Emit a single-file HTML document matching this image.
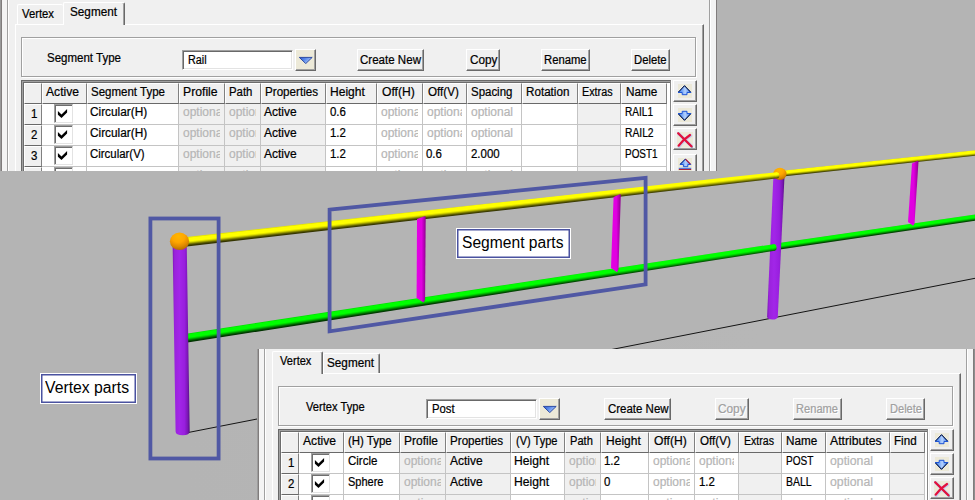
<!DOCTYPE html>
<html lang="en"><head><meta charset="utf-8"><title>Vertex and Segment parts</title>
<style>
html,body{margin:0;padding:0}
body{width:975px;height:500px;overflow:hidden;background:#b4b4b4;position:relative;
 font-family:"Liberation Sans",sans-serif;font-size:12px;color:#000}
.scene{position:absolute;left:0;top:0}
.dlg{position:absolute;background:#f0f0f0;overflow:hidden}
.a,.t,.btn,.edit,.grp,.gridbox,.hc,.rn,.dc,.chk,.clip,.ic,.lbl{position:absolute;box-sizing:border-box}
.t{white-space:nowrap;display:block;transform-origin:0 0;-webkit-text-stroke:0.22px currentColor}
.clip{overflow:hidden}
.btn{background:#f0f0f0;border:1px solid;border-color:#fff #696969 #696969 #fff;box-shadow:inset -1px -1px 0 #a0a0a0}
.cbtn{background:#ece9d8}
.edit{background:#fff;border:1px solid;border-color:#a0a0a0 #fff #fff #a0a0a0;box-shadow:inset 1px 1px 0 #696969,inset -1px -1px 0 #e3e3e3}
.grp{border:1px solid #a0a0a0;box-shadow:1px 1px 0 #fff,inset 1px 1px 0 #fff}
.tab{background:#f0f0f0;border-left:1px solid #fff;border-top:1px solid #fff;border-radius:2px 2px 0 0}
.tab.sel,.tab.last{border-right:1px solid #696969;box-shadow:inset -1px 0 0 #a0a0a0}
.gridbox{background:#fff;border:1px solid;border-color:#696969 #868686 #fff #696969;box-shadow:inset 1px 1px 0 #a0a0a0,inset 2px 2px 0 #6c6c6c,1px 0 0 #fff}
.hc{background:#f0f0f0;border:1px solid;border-color:#fff #808080 #696969 #fff}
.rn{background:#f0f0f0;border:1px solid;border-color:#fff #808080 #696969 #fff}
.dc{border-right:1px solid #c4c4c4;border-bottom:1px solid #c4c4c4}
.chk{background:#fff;border:1px solid;border-color:#a0a0a0 #e3e3e3 #e3e3e3 #a0a0a0;box-shadow:inset 1px 1px 0 #6e6e6e}
.lbl{background:#fff;border:1px solid #fff;box-shadow:inset 0 0 0 1.5px #4a52a0}
</style></head>
<body>
<svg class="scene" width="975" height="500" viewBox="0 0 975 500">
<defs><linearGradient id="pp" x1="0" y1="0" x2="1" y2="0"><stop offset="0" stop-color="#7c18b4"/><stop offset="0.12" stop-color="#9a22dc"/><stop offset="0.4" stop-color="#a226e8"/><stop offset="0.7" stop-color="#981ede"/><stop offset="0.88" stop-color="#7a16b4"/><stop offset="1" stop-color="#540c80"/></linearGradient><linearGradient id="mg" x1="0" y1="0" x2="1" y2="0"><stop offset="0" stop-color="#e400e4"/><stop offset="0.55" stop-color="#e000e0"/><stop offset="0.8" stop-color="#b400b4"/><stop offset="1" stop-color="#8c008c"/></linearGradient><radialGradient id="bl" cx="0.44" cy="0.22" r="0.85"><stop offset="0" stop-color="#ffb600"/><stop offset="0.4" stop-color="#ffa600"/><stop offset="0.68" stop-color="#e08a00"/><stop offset="0.9" stop-color="#b87000"/><stop offset="1" stop-color="#9c5c00"/></radialGradient><linearGradient id="gd" gradientUnits="userSpaceOnUse" x1="184" y1="0" x2="760" y2="0"><stop offset="0" stop-color="#b4b4b4"/><stop offset="1" stop-color="#b7b7b7"/></linearGradient></defs>
<polygon points="184,433.3 975,278.3 975,500 184,500" fill="url(#gd)"/>
<line x1="186" y1="432.94" x2="975" y2="278.30" stroke="#141414" stroke-width="1"/>
<linearGradient id="g2" gradientUnits="userSpaceOnUse" x1="775.54" y1="243.69" x2="776.46" y2="249.98"><stop offset="0" stop-color="#00e600"/><stop offset="0.08" stop-color="#00ff00"/><stop offset="0.44" stop-color="#00ff00"/><stop offset="0.58" stop-color="#00d400"/><stop offset="0.72" stop-color="#009400"/><stop offset="0.87" stop-color="#005000"/><stop offset="1" stop-color="#003000"/></linearGradient><polygon points="775.52,243.57 975.56,214.42 976.44,220.45 776.48,250.10" fill="url(#g2)"/>
<linearGradient id="y2" gradientUnits="userSpaceOnUse" x1="779.70" y1="171.00" x2="780.30" y2="176.67"><stop offset="0" stop-color="#e8e800"/><stop offset="0.08" stop-color="#ffff00"/><stop offset="0.44" stop-color="#ffff00"/><stop offset="0.58" stop-color="#dcdc00"/><stop offset="0.72" stop-color="#9c9c00"/><stop offset="0.87" stop-color="#585800"/><stop offset="1" stop-color="#343400"/></linearGradient><polygon points="779.69,170.90 975.71,150.15 976.29,155.62 780.31,176.77" fill="url(#y2)"/>
<path d="M773.4,176 L784.5,176 L777.8,316.5 Q777.6,319.6 772.3,319.6 Q767,319.6 767.1,316.5 Z" fill="url(#pp)"/>
<ellipse cx="779.9" cy="173.9" rx="6.6" ry="6.2" fill="url(#bl)"/>
<linearGradient id="y1" gradientUnits="userSpaceOnUse" x1="179.55" y1="238.45" x2="180.45" y2="246.40"><stop offset="0" stop-color="#e8e800"/><stop offset="0.08" stop-color="#ffff00"/><stop offset="0.44" stop-color="#ffff00"/><stop offset="0.58" stop-color="#dcdc00"/><stop offset="0.72" stop-color="#9c9c00"/><stop offset="0.87" stop-color="#585800"/><stop offset="1" stop-color="#343400"/></linearGradient><polygon points="179.47,237.70 309.49,223.28 479.53,204.50 719.61,178.25 776.86,172.21 777.54,178.27 720.39,185.10 480.47,212.85 310.51,232.32 180.53,247.15" fill="url(#y1)"/><ellipse cx="777.20" cy="175.24" rx="2.20" ry="3.05" fill="url(#y1)" transform="rotate(-6.42 777.20 175.24)"/>
<linearGradient id="g1" gradientUnits="userSpaceOnUse" x1="181.40" y1="334.92" x2="182.60" y2="342.73"><stop offset="0" stop-color="#00e600"/><stop offset="0.08" stop-color="#00ff00"/><stop offset="0.44" stop-color="#00ff00"/><stop offset="0.58" stop-color="#00d400"/><stop offset="0.72" stop-color="#009400"/><stop offset="0.87" stop-color="#005000"/><stop offset="1" stop-color="#003000"/></linearGradient><polygon points="181.31,334.38 499.39,285.81 773.69,244.14 774.71,250.76 500.61,293.71 182.69,343.27" fill="url(#g1)"/><ellipse cx="774.20" cy="247.45" rx="2.41" ry="3.35" fill="url(#g1)" transform="rotate(-8.77 774.20 247.45)"/>
<polygon points="417,219 424.6,216.2 425.7,216.6 425.1,300 423.4,302.6 416.6,298" fill="url(#mg)"/>
<polygon points="613.6,197 619.8,194.2 620.8,194.6 618.5,269.6 617,272.2 611,268" fill="url(#mg)"/>
<polygon points="912,163.4 917.6,160.8 918.5,161.2 914.5,223.4 913.2,225.8 908,222" fill="url(#mg)"/>
<path d="M172.6,243 L186.7,243 L189.7,431.5 Q189.8,435.3 182.7,435.3 Q175.7,435.3 175.6,431.5 Z" fill="url(#pp)"/>
<ellipse cx="179.5" cy="241.3" rx="9.6" ry="8.7" fill="url(#bl)"/>
<rect x="150.4" y="218.5" width="68.2" height="240" fill="none" stroke="#5058a4" stroke-width="3.8"/>
<polygon points="329.6,209.6 645.6,177.9 645.6,284.3 329.6,331.3" fill="none" stroke="#5058a4" stroke-width="3.8" stroke-linejoin="miter"/>
</svg>
<div class="dlg" style="left:0;top:0;width:717px;height:171px">
<div class="a" style="left:0px;top:0;width:1px;height:171px;background:#9a9a9a"></div>
<div class="a" style="left:1px;top:0;width:1px;height:171px;background:#807c7c"></div>
<div class="a" style="left:2px;top:0;width:5px;height:171px;background:#f4f4f4"></div>
<div class="a" style="left:7px;top:0;width:1px;height:171px;background:#a0a0a0"></div>
<div class="a" style="left:8px;top:0;width:1px;height:171px;background:#ffffff"></div>
<div class="a" style="left:709px;top:0;width:1px;height:171px;background:#a0a0a0"></div>
<div class="a" style="left:710px;top:0;width:1px;height:171px;background:#ffffff"></div>
<div class="a" style="left:711px;top:0;width:5px;height:171px;background:#f3f3f3"></div>
<div class="a" style="left:716px;top:0;width:1px;height:171px;background:#807c7c"></div>
<div class="a" style="left:15px;top:24px;width:689px;height:160px;border-left:1px solid #fff;border-top:1px solid #fff;border-right:1px solid #696969;box-sizing:border-box"></div>
<div class="a" style="left:702px;top:25px;width:1px;height:160px;background:#a0a0a0"></div>
<div class="a tab" style="left:17px;top:4px;width:46px;height:20px"></div>
<div class="a tab sel" style="left:63px;top:2px;width:62px;height:23px"></div>
<span class="t" style="left:22.00px;top:6.94px;line-height:15px;font-size:12px;transform:scaleX(0.9407);">Vertex</span>
<span class="t" style="left:70.00px;top:5.34px;line-height:15px;font-size:12px;transform:scaleX(0.9785);">Segment</span>
<div class="grp" style="left:21px;top:37px;width:675px;height:40px;"></div>
<span class="t" style="left:47.00px;top:51.34px;line-height:15px;font-size:12px;transform:scaleX(0.9591);">Segment Type</span>
<div class="edit" style="left:182px;top:50px;width:111px;height:20px;"></div>
<span class="t" style="left:188.40px;top:52.94px;line-height:15px;font-size:12px;transform:scaleX(0.8998);">Rail</span>
<div class="btn cbtn" style="left:295px;top:49px;width:21px;height:22px;"></div>
<svg class="ic" style="left:298px;top:56px" width="15" height="8" viewBox="0 0 15 8"><defs><linearGradient id="td" x1="0" y1="0" x2="1" y2="0.5"><stop offset="0" stop-color="#2a56cc"/><stop offset="0.5" stop-color="#5f8eec"/><stop offset="1" stop-color="#b4cdf8"/></linearGradient></defs><path d="M1.3,1.4 L14.2,1.4 L7.75,7.6 Z" fill="url(#td)" stroke="#1f3f9c" stroke-width="0.9"/></svg>
<div class="btn" style="left:357px;top:49px;width:67px;height:22px;"></div>
<span class="t" style="left:360.00px;top:53.34px;line-height:15px;font-size:12px;transform:scaleX(0.9623);">Create New</span>
<div class="btn" style="left:466px;top:49px;width:34px;height:22px;"></div>
<span class="t" style="left:469.60px;top:53.34px;line-height:15px;font-size:12px;transform:scaleX(0.9780);">Copy</span>
<div class="btn" style="left:541px;top:49px;width:49px;height:22px;"></div>
<span class="t" style="left:544.40px;top:53.34px;line-height:15px;font-size:12px;transform:scaleX(0.9392);">Rename</span>
<div class="btn" style="left:631px;top:49px;width:39px;height:22px;"></div>
<span class="t" style="left:634.40px;top:53.34px;line-height:15px;font-size:12px;transform:scaleX(0.9398);">Delete</span>
<div class="gridbox" style="left:21px;top:80px;width:650px;height:110px;"></div>
<div class="hc" style="left:24px;top:83px;width:18px;height:21px;"></div>
<div class="hc" style="left:42px;top:83px;width:45px;height:21px;"></div>
<div class="hc" style="left:87px;top:83px;width:92px;height:21px;"></div>
<div class="hc" style="left:179px;top:83px;width:46px;height:21px;"></div>
<div class="hc" style="left:225px;top:83px;width:36px;height:21px;"></div>
<div class="hc" style="left:261px;top:83px;width:65px;height:21px;"></div>
<div class="hc" style="left:326px;top:83px;width:51px;height:21px;"></div>
<div class="hc" style="left:377px;top:83px;width:46px;height:21px;"></div>
<div class="hc" style="left:423px;top:83px;width:44px;height:21px;"></div>
<div class="hc" style="left:467px;top:83px;width:55px;height:21px;"></div>
<div class="hc" style="left:522px;top:83px;width:56px;height:21px;"></div>
<div class="hc" style="left:578px;top:83px;width:43px;height:21px;"></div>
<div class="hc" style="left:621px;top:83px;width:46px;height:21px;"></div>
<span class="t" style="left:46.00px;top:85.34px;line-height:15px;font-size:12px;transform:scaleX(1.0100);">Active</span>
<span class="t" style="left:91.00px;top:85.34px;line-height:15px;font-size:12px;transform:scaleX(0.9591);">Segment Type</span>
<span class="t" style="left:183.00px;top:85.34px;line-height:15px;font-size:12px;transform:scaleX(1.0172);">Profile</span>
<span class="t" style="left:229.00px;top:85.34px;line-height:15px;font-size:12px;transform:scaleX(0.9478);">Path</span>
<span class="t" style="left:265.00px;top:85.34px;line-height:15px;font-size:12px;transform:scaleX(0.9691);">Properties</span>
<span class="t" style="left:330.00px;top:85.34px;line-height:15px;font-size:12px;transform:scaleX(1.0032);">Height</span>
<span class="t" style="left:381.60px;top:85.34px;line-height:15px;font-size:12px;transform:scaleX(1.0112);">Off(H)</span>
<span class="t" style="left:427.60px;top:85.34px;line-height:15px;font-size:12px;transform:scaleX(0.9691);">Off(V)</span>
<span class="t" style="left:471.00px;top:85.34px;line-height:15px;font-size:12px;transform:scaleX(0.9548);">Spacing</span>
<span class="t" style="left:525.60px;top:85.34px;line-height:15px;font-size:12px;transform:scaleX(0.9708);">Rotation</span>
<span class="t" style="left:582.40px;top:85.34px;line-height:15px;font-size:12px;transform:scaleX(0.8996);">Extras</span>
<span class="t" style="left:625.60px;top:85.34px;line-height:15px;font-size:12px;transform:scaleX(0.9808);">Name</span>
<div class="rn" style="left:24px;top:104px;width:18px;height:21px;"></div>
<span class="t" style="left:30.66px;top:107.14px;line-height:15px;font-size:12px;transform:scaleX(0.9550);">1</span>
<div class="dc" style="left:42px;top:104px;width:45px;height:21px;background:#ffffff;"></div>
<div class="dc" style="left:87px;top:104px;width:92px;height:21px;background:#ffffff;"></div>
<div class="dc" style="left:179px;top:104px;width:46px;height:21px;background:#f0f0f0;"></div>
<div class="dc" style="left:225px;top:104px;width:36px;height:21px;background:#f0f0f0;"></div>
<div class="dc" style="left:261px;top:104px;width:65px;height:21px;background:#f0f0f0;"></div>
<div class="dc" style="left:326px;top:104px;width:51px;height:21px;background:#ffffff;"></div>
<div class="dc" style="left:377px;top:104px;width:46px;height:21px;background:#ffffff;"></div>
<div class="dc" style="left:423px;top:104px;width:44px;height:21px;background:#ffffff;"></div>
<div class="dc" style="left:467px;top:104px;width:55px;height:21px;background:#ffffff;"></div>
<div class="dc" style="left:522px;top:104px;width:56px;height:21px;background:#ffffff;"></div>
<div class="dc" style="left:578px;top:104px;width:43px;height:21px;background:#f0f0f0;"></div>
<div class="dc" style="left:621px;top:104px;width:46px;height:21px;background:#ffffff;"></div>
<div class="chk" style="left:54px;top:104px;width:19px;height:19px;"><svg width="19" height="19" viewBox="0 0 19 19" style="position:absolute;left:0;top:0"><polygon points="2.9,5.9 6.5,9.4 12.1,3.9 12.1,7.6 6.5,13.1 2.9,9.7" fill="#000"/></svg></div>
<span class="t" style="left:90.40px;top:105.04px;line-height:15px;font-size:12px;transform:scaleX(0.9862);">Circular(H)</span>
<div class="clip" style="left:179.6px;top:104px;width:40.4px;height:20px">
<span class="t" style="left:3.00px;top:1.04px;line-height:15px;font-size:12px;transform:scaleX(0.9993);color:#b6b6b6;">optional</span>
</div>
<div class="clip" style="left:225.6px;top:104px;width:30.4px;height:20px">
<span class="t" style="left:3.00px;top:1.04px;line-height:15px;font-size:12px;transform:scaleX(0.9993);color:#b6b6b6;">optional</span>
</div>
<span class="t" style="left:264.40px;top:105.04px;line-height:15px;font-size:12px;transform:scaleX(0.9978);">Active</span>
<span class="t" style="left:329.60px;top:105.04px;line-height:15px;font-size:12px;transform:scaleX(0.9550);">0.6</span>
<div class="clip" style="left:377.8px;top:104px;width:40.2px;height:20px">
<span class="t" style="left:3.00px;top:1.04px;line-height:15px;font-size:12px;transform:scaleX(0.9993);color:#b6b6b6;">optional</span>
</div>
<div class="clip" style="left:423.8px;top:104px;width:38.2px;height:20px">
<span class="t" style="left:3.00px;top:1.04px;line-height:15px;font-size:12px;transform:scaleX(0.9993);color:#b6b6b6;">optional</span>
</div>
<span class="t" style="left:471.00px;top:105.04px;line-height:15px;font-size:12px;transform:scaleX(0.9993);color:#b6b6b6;">optional</span>
<span class="t" style="left:625.00px;top:105.04px;line-height:15px;font-size:12px;transform:scaleX(0.8393);">RAIL1</span>
<div class="rn" style="left:24px;top:125px;width:18px;height:21px;"></div>
<span class="t" style="left:30.66px;top:128.14px;line-height:15px;font-size:12px;transform:scaleX(0.9550);">2</span>
<div class="dc" style="left:42px;top:125px;width:45px;height:21px;background:#ffffff;"></div>
<div class="dc" style="left:87px;top:125px;width:92px;height:21px;background:#ffffff;"></div>
<div class="dc" style="left:179px;top:125px;width:46px;height:21px;background:#f0f0f0;"></div>
<div class="dc" style="left:225px;top:125px;width:36px;height:21px;background:#f0f0f0;"></div>
<div class="dc" style="left:261px;top:125px;width:65px;height:21px;background:#f0f0f0;"></div>
<div class="dc" style="left:326px;top:125px;width:51px;height:21px;background:#ffffff;"></div>
<div class="dc" style="left:377px;top:125px;width:46px;height:21px;background:#ffffff;"></div>
<div class="dc" style="left:423px;top:125px;width:44px;height:21px;background:#ffffff;"></div>
<div class="dc" style="left:467px;top:125px;width:55px;height:21px;background:#ffffff;"></div>
<div class="dc" style="left:522px;top:125px;width:56px;height:21px;background:#ffffff;"></div>
<div class="dc" style="left:578px;top:125px;width:43px;height:21px;background:#f0f0f0;"></div>
<div class="dc" style="left:621px;top:125px;width:46px;height:21px;background:#ffffff;"></div>
<div class="chk" style="left:54px;top:125px;width:19px;height:19px;"><svg width="19" height="19" viewBox="0 0 19 19" style="position:absolute;left:0;top:0"><polygon points="2.9,5.9 6.5,9.4 12.1,3.9 12.1,7.6 6.5,13.1 2.9,9.7" fill="#000"/></svg></div>
<span class="t" style="left:90.40px;top:126.04px;line-height:15px;font-size:12px;transform:scaleX(0.9862);">Circular(H)</span>
<div class="clip" style="left:179.6px;top:125px;width:40.4px;height:20px">
<span class="t" style="left:3.00px;top:1.04px;line-height:15px;font-size:12px;transform:scaleX(0.9993);color:#b6b6b6;">optional</span>
</div>
<div class="clip" style="left:225.6px;top:125px;width:30.4px;height:20px">
<span class="t" style="left:3.00px;top:1.04px;line-height:15px;font-size:12px;transform:scaleX(0.9993);color:#b6b6b6;">optional</span>
</div>
<span class="t" style="left:264.40px;top:126.04px;line-height:15px;font-size:12px;transform:scaleX(0.9978);">Active</span>
<span class="t" style="left:329.60px;top:126.04px;line-height:15px;font-size:12px;transform:scaleX(0.9550);">1.2</span>
<div class="clip" style="left:377.8px;top:125px;width:40.2px;height:20px">
<span class="t" style="left:3.00px;top:1.04px;line-height:15px;font-size:12px;transform:scaleX(0.9993);color:#b6b6b6;">optional</span>
</div>
<div class="clip" style="left:423.8px;top:125px;width:38.2px;height:20px">
<span class="t" style="left:3.00px;top:1.04px;line-height:15px;font-size:12px;transform:scaleX(0.9993);color:#b6b6b6;">optional</span>
</div>
<span class="t" style="left:471.00px;top:126.04px;line-height:15px;font-size:12px;transform:scaleX(0.9993);color:#b6b6b6;">optional</span>
<span class="t" style="left:625.00px;top:126.04px;line-height:15px;font-size:12px;transform:scaleX(0.8573);">RAIL2</span>
<div class="rn" style="left:24px;top:146px;width:18px;height:21px;"></div>
<span class="t" style="left:30.66px;top:149.14px;line-height:15px;font-size:12px;transform:scaleX(0.9550);">3</span>
<div class="dc" style="left:42px;top:146px;width:45px;height:21px;background:#ffffff;"></div>
<div class="dc" style="left:87px;top:146px;width:92px;height:21px;background:#ffffff;"></div>
<div class="dc" style="left:179px;top:146px;width:46px;height:21px;background:#f0f0f0;"></div>
<div class="dc" style="left:225px;top:146px;width:36px;height:21px;background:#f0f0f0;"></div>
<div class="dc" style="left:261px;top:146px;width:65px;height:21px;background:#f0f0f0;"></div>
<div class="dc" style="left:326px;top:146px;width:51px;height:21px;background:#ffffff;"></div>
<div class="dc" style="left:377px;top:146px;width:46px;height:21px;background:#ffffff;"></div>
<div class="dc" style="left:423px;top:146px;width:44px;height:21px;background:#ffffff;"></div>
<div class="dc" style="left:467px;top:146px;width:55px;height:21px;background:#ffffff;"></div>
<div class="dc" style="left:522px;top:146px;width:56px;height:21px;background:#ffffff;"></div>
<div class="dc" style="left:578px;top:146px;width:43px;height:21px;background:#f0f0f0;"></div>
<div class="dc" style="left:621px;top:146px;width:46px;height:21px;background:#ffffff;"></div>
<div class="chk" style="left:54px;top:146px;width:19px;height:19px;"><svg width="19" height="19" viewBox="0 0 19 19" style="position:absolute;left:0;top:0"><polygon points="2.9,5.9 6.5,9.4 12.1,3.9 12.1,7.6 6.5,13.1 2.9,9.7" fill="#000"/></svg></div>
<span class="t" style="left:90.40px;top:147.04px;line-height:15px;font-size:12px;transform:scaleX(0.9524);">Circular(V)</span>
<div class="clip" style="left:179.6px;top:146px;width:40.4px;height:20px">
<span class="t" style="left:3.00px;top:1.04px;line-height:15px;font-size:12px;transform:scaleX(0.9993);color:#b6b6b6;">optional</span>
</div>
<div class="clip" style="left:225.6px;top:146px;width:30.4px;height:20px">
<span class="t" style="left:3.00px;top:1.04px;line-height:15px;font-size:12px;transform:scaleX(0.9993);color:#b6b6b6;">optional</span>
</div>
<span class="t" style="left:264.40px;top:147.04px;line-height:15px;font-size:12px;transform:scaleX(0.9978);">Active</span>
<span class="t" style="left:329.60px;top:147.04px;line-height:15px;font-size:12px;transform:scaleX(0.9550);">1.2</span>
<div class="clip" style="left:377.8px;top:146px;width:40.2px;height:20px">
<span class="t" style="left:3.00px;top:1.04px;line-height:15px;font-size:12px;transform:scaleX(0.9993);color:#b6b6b6;">optional</span>
</div>
<span class="t" style="left:426.40px;top:147.04px;line-height:15px;font-size:12px;transform:scaleX(0.9550);">0.6</span>
<span class="t" style="left:471.00px;top:147.04px;line-height:15px;font-size:12px;transform:scaleX(0.9550);">2.000</span>
<span class="t" style="left:625.00px;top:147.04px;line-height:15px;font-size:12px;transform:scaleX(0.8286);">POST1</span>
<div class="rn" style="left:24px;top:167px;width:18px;height:21px;"></div>
<div class="dc" style="left:42px;top:167px;width:45px;height:21px;background:#ffffff;"></div>
<div class="dc" style="left:87px;top:167px;width:92px;height:21px;background:#ffffff;"></div>
<div class="dc" style="left:179px;top:167px;width:46px;height:21px;background:#f0f0f0;"></div>
<div class="dc" style="left:225px;top:167px;width:36px;height:21px;background:#f0f0f0;"></div>
<div class="dc" style="left:261px;top:167px;width:65px;height:21px;background:#f0f0f0;"></div>
<div class="dc" style="left:326px;top:167px;width:51px;height:21px;background:#ffffff;"></div>
<div class="dc" style="left:377px;top:167px;width:46px;height:21px;background:#ffffff;"></div>
<div class="dc" style="left:423px;top:167px;width:44px;height:21px;background:#ffffff;"></div>
<div class="dc" style="left:467px;top:167px;width:55px;height:21px;background:#ffffff;"></div>
<div class="dc" style="left:522px;top:167px;width:56px;height:21px;background:#ffffff;"></div>
<div class="dc" style="left:578px;top:167px;width:43px;height:21px;background:#f0f0f0;"></div>
<div class="dc" style="left:621px;top:167px;width:46px;height:21px;background:#ffffff;"></div>
<div class="chk" style="left:54px;top:167px;width:19px;height:19px;"></div>
<div class="clip" style="left:179.6px;top:167px;width:40.4px;height:20px">
<span class="t" style="left:3.00px;top:1.04px;line-height:15px;font-size:12px;transform:scaleX(0.9993);color:#b6b6b6;">optional</span>
</div>
<div class="clip" style="left:225.6px;top:167px;width:30.4px;height:20px">
<span class="t" style="left:3.00px;top:1.04px;line-height:15px;font-size:12px;transform:scaleX(0.9993);color:#b6b6b6;">optional</span>
</div>
<div class="clip" style="left:377.8px;top:167px;width:40.2px;height:20px">
<span class="t" style="left:3.00px;top:1.04px;line-height:15px;font-size:12px;transform:scaleX(0.9993);color:#b6b6b6;">optional</span>
</div>
<div class="clip" style="left:423.8px;top:167px;width:38.2px;height:20px">
<span class="t" style="left:3.00px;top:1.04px;line-height:15px;font-size:12px;transform:scaleX(0.9993);color:#b6b6b6;">optional</span>
</div>
<span class="t" style="left:471.00px;top:168.04px;line-height:15px;font-size:12px;transform:scaleX(0.9993);color:#b6b6b6;">optional</span>
<div class="btn" style="left:673px;top:80px;width:24px;height:22px;"></div>
<svg class="ic" style="left:678px;top:84px" width="14" height="14" viewBox="0 0 14 14"><rect width="14" height="14" fill="#ece9d8"/><defs><linearGradient id="au" x1="0" y1="0" x2="1" y2="0"><stop offset="0" stop-color="#2f6fe6"/><stop offset="0.3" stop-color="#6fa2f6"/><stop offset="0.55" stop-color="#b6d2fd"/><stop offset="0.8" stop-color="#6c9ff4"/><stop offset="1" stop-color="#2f6fe6"/></linearGradient></defs><path d="M6.5,1.7 L13,8.5 L9,8.5 L9,10.7 L4.2,10.7 L4.2,8.5 L0,8.5 Z" fill="url(#au)" stroke="#1f56d6" stroke-width="1"/><path d="M0.6,7.9 L6.5,1.7 L12.4,7.9" fill="none" stroke="#0c1226" stroke-width="1.0"/><path d="M0.2,7.0 L5.8,1.2" fill="none" stroke="#ffffff" stroke-opacity="0.7" stroke-width="0.7"/></svg>
<div class="btn" style="left:673px;top:104px;width:24px;height:22px;"></div>
<svg class="ic" style="left:678px;top:108px" width="14" height="14" viewBox="0 0 14 14"><rect width="14" height="14" fill="#ece9d8"/><defs><linearGradient id="ad" x1="0" y1="0" x2="1" y2="0"><stop offset="0" stop-color="#2f6fe6"/><stop offset="0.3" stop-color="#6fa2f6"/><stop offset="0.55" stop-color="#b6d2fd"/><stop offset="0.8" stop-color="#6c9ff4"/><stop offset="1" stop-color="#2f6fe6"/></linearGradient></defs><path d="M6.5,12.3 L13,5.5 L9,5.5 L9,3.3 L4.2,3.3 L4.2,5.5 L0,5.5 Z" fill="url(#ad)" stroke="#1f56d6" stroke-width="1"/><path d="M0.6,6.1 L6.5,12.3 L12.4,6.1" fill="none" stroke="#0c1226" stroke-width="1.0"/></svg>
<div class="btn" style="left:673px;top:128px;width:24px;height:22px;"></div>
<svg class="ic" style="left:677px;top:132px" width="16" height="16" viewBox="0 0 16 16"><rect width="16" height="15.6" fill="#ece9d8"/><path d="M1.6,1.6 L15.2,14.8 M13.6,3.6 Q6,8.5 2.2,14.4" stroke="#c4ccee" stroke-width="3.2" fill="none" stroke-linecap="round"/><path d="M2,2.2 L15,15 " stroke="#3a3a50" stroke-opacity="0.55" stroke-width="1.6" fill="none" stroke-linecap="round"/><path d="M1.2,1.2 L14.4,14.2 M13,3 Q6,7.6 1.7,13.7" stroke="#e4103c" stroke-width="2.2" fill="none" stroke-linecap="round"/></svg>
<div class="btn" style="left:673px;top:154px;width:24px;height:22px;"></div>
<svg class="ic" style="left:678px;top:158px" width="14" height="14" viewBox="0 0 14 14"><rect width="14" height="14" fill="#ece9d8"/><defs><linearGradient id="au" x1="0" y1="0" x2="1" y2="0"><stop offset="0" stop-color="#2f6fe6"/><stop offset="0.3" stop-color="#6fa2f6"/><stop offset="0.55" stop-color="#b6d2fd"/><stop offset="0.8" stop-color="#6c9ff4"/><stop offset="1" stop-color="#2f6fe6"/></linearGradient></defs><path d="M7.4,1.1 L12.8,6.5 L9.8,6.5 L9.8,8.7 L5.4,8.7 L5.4,6.5 L1.9,6.5 Z" fill="url(#au)" stroke="#1f56d6" stroke-width="1"/><path d="M7.4,1.1 L12.4,6.1" fill="none" stroke="#b00c30" stroke-width="1.1"/><path d="M2.4,6.1 L7.4,1.1" fill="none" stroke="#16307c" stroke-width="1.0"/><rect x="0.8" y="9.8" width="12.4" height="1.1" fill="#3c7cf0"/><rect x="0.8" y="10.9" width="12.4" height="1.0" fill="#a00a28"/></svg>
</div>
<div class="dlg" style="left:257px;top:349px;width:718px;height:151px">
<div class="a" style="left:0px;top:0;width:1px;height:151px;background:#9c9c9c"></div>
<div class="a" style="left:1px;top:0;width:1px;height:151px;background:#807c7c"></div>
<div class="a" style="left:2px;top:0;width:5px;height:151px;background:#f4f4f4"></div>
<div class="a" style="left:7px;top:0;width:1px;height:151px;background:#a0a0a0"></div>
<div class="a" style="left:8px;top:0;width:1px;height:151px;background:#ffffff"></div>
<div class="a" style="left:709px;top:0;width:1px;height:151px;background:#a0a0a0"></div>
<div class="a" style="left:710px;top:0;width:1px;height:151px;background:#ffffff"></div>
<div class="a" style="left:711px;top:0;width:5px;height:151px;background:#f3f3f3"></div>
<div class="a" style="left:716px;top:0;width:1px;height:151px;background:#807c7c"></div>
<div class="a" style="left:717px;top:0;width:1px;height:151px;background:#8e8e8e"></div>
<div class="a" style="left:15px;top:24px;width:689px;height:160px;border-left:1px solid #fff;border-top:1px solid #fff;border-right:1px solid #696969;box-sizing:border-box"></div>
<div class="a" style="left:702px;top:25px;width:1px;height:160px;background:#a0a0a0"></div>
<div class="a tab last" style="left:66px;top:4px;width:57px;height:20px"></div>
<div class="a tab sel" style="left:15px;top:2px;width:51px;height:23px"></div>
<span class="t" style="left:22.60px;top:5.34px;line-height:15px;font-size:12px;transform:scaleX(0.9231);">Vertex</span>
<span class="t" style="left:70.00px;top:7.34px;line-height:15px;font-size:12px;transform:scaleX(0.9785);">Segment</span>
<div class="grp" style="left:21px;top:37px;width:675px;height:40px;"></div>
<span class="t" style="left:49.40px;top:51.34px;line-height:15px;font-size:12px;transform:scaleX(0.9279);">Vertex Type</span>
<div class="edit" style="left:169px;top:50px;width:111px;height:20px;"></div>
<span class="t" style="left:175.40px;top:52.74px;line-height:15px;font-size:12px;transform:scaleX(0.9411);">Post</span>
<div class="btn cbtn" style="left:282px;top:49px;width:21px;height:22px;"></div>
<svg class="ic" style="left:285px;top:56px" width="15" height="8" viewBox="0 0 15 8"><defs><linearGradient id="td" x1="0" y1="0" x2="1" y2="0.5"><stop offset="0" stop-color="#2a56cc"/><stop offset="0.5" stop-color="#5f8eec"/><stop offset="1" stop-color="#b4cdf8"/></linearGradient></defs><path d="M1.3,1.4 L14.2,1.4 L7.75,7.6 Z" fill="url(#td)" stroke="#1f3f9c" stroke-width="0.9"/></svg>
<div class="btn" style="left:347px;top:49px;width:67px;height:22px;"></div>
<span class="t" style="left:350.60px;top:52.94px;line-height:15px;font-size:12px;transform:scaleX(0.9560);">Create New</span>
<div class="btn" style="left:458px;top:49px;width:34px;height:22px;"></div>
<span class="t" style="left:462.40px;top:53.94px;line-height:15px;font-size:12px;transform:scaleX(0.9852);color:#ffffff;">Copy</span>
<span class="t" style="left:461.40px;top:52.94px;line-height:15px;font-size:12px;transform:scaleX(0.9852);color:#a0a0a0;">Copy</span>
<div class="btn" style="left:536px;top:49px;width:49px;height:22px;"></div>
<span class="t" style="left:540.40px;top:53.94px;line-height:15px;font-size:12px;transform:scaleX(0.9259);color:#ffffff;">Rename</span>
<span class="t" style="left:539.40px;top:52.94px;line-height:15px;font-size:12px;transform:scaleX(0.9259);color:#a0a0a0;">Rename</span>
<div class="btn" style="left:629px;top:49px;width:39px;height:22px;"></div>
<span class="t" style="left:633.60px;top:53.94px;line-height:15px;font-size:12px;transform:scaleX(0.9225);color:#ffffff;">Delete</span>
<span class="t" style="left:632.60px;top:52.94px;line-height:15px;font-size:12px;transform:scaleX(0.9225);color:#a0a0a0;">Delete</span>
<div class="gridbox" style="left:21px;top:80px;width:650px;height:110px;"></div>
<div class="hc" style="left:24px;top:83px;width:18px;height:21px;"></div>
<div class="hc" style="left:42px;top:83px;width:45px;height:21px;"></div>
<div class="hc" style="left:87px;top:83px;width:56px;height:21px;"></div>
<div class="hc" style="left:143px;top:83px;width:46px;height:21px;"></div>
<div class="hc" style="left:189px;top:83px;width:65px;height:21px;"></div>
<div class="hc" style="left:254px;top:83px;width:54px;height:21px;"></div>
<div class="hc" style="left:308px;top:83px;width:36px;height:21px;"></div>
<div class="hc" style="left:344px;top:83px;width:48px;height:21px;"></div>
<div class="hc" style="left:392px;top:83px;width:46px;height:21px;"></div>
<div class="hc" style="left:438px;top:83px;width:44px;height:21px;"></div>
<div class="hc" style="left:482px;top:83px;width:43px;height:21px;"></div>
<div class="hc" style="left:525px;top:83px;width:44px;height:21px;"></div>
<div class="hc" style="left:569px;top:83px;width:64px;height:21px;"></div>
<div class="hc" style="left:633px;top:83px;width:35px;height:21px;"></div>
<span class="t" style="left:46.00px;top:85.34px;line-height:15px;font-size:12px;transform:scaleX(1.0100);">Active</span>
<span class="t" style="left:91.40px;top:85.34px;line-height:15px;font-size:12px;transform:scaleX(0.9520);">(H) Type</span>
<span class="t" style="left:147.00px;top:85.34px;line-height:15px;font-size:12px;transform:scaleX(0.9995);">Profile</span>
<span class="t" style="left:193.00px;top:85.34px;line-height:15px;font-size:12px;transform:scaleX(0.9691);">Properties</span>
<span class="t" style="left:258.60px;top:85.34px;line-height:15px;font-size:12px;transform:scaleX(0.9175);">(V) Type</span>
<span class="t" style="left:312.60px;top:85.34px;line-height:15px;font-size:12px;transform:scaleX(0.9235);">Path</span>
<span class="t" style="left:348.60px;top:85.34px;line-height:15px;font-size:12px;transform:scaleX(1.0032);">Height</span>
<span class="t" style="left:396.60px;top:85.34px;line-height:15px;font-size:12px;transform:scaleX(1.0112);">Off(H)</span>
<span class="t" style="left:442.60px;top:85.34px;line-height:15px;font-size:12px;transform:scaleX(0.9691);">Off(V)</span>
<span class="t" style="left:486.60px;top:85.34px;line-height:15px;font-size:12px;transform:scaleX(0.8819);">Extras</span>
<span class="t" style="left:529.40px;top:85.34px;line-height:15px;font-size:12px;transform:scaleX(0.9745);">Name</span>
<span class="t" style="left:573.40px;top:85.34px;line-height:15px;font-size:12px;transform:scaleX(1.0180);">Attributes</span>
<span class="t" style="left:637.40px;top:85.34px;line-height:15px;font-size:12px;transform:scaleX(0.9681);">Find</span>
<div class="rn" style="left:24px;top:104px;width:18px;height:21px;"></div>
<span class="t" style="left:30.66px;top:107.14px;line-height:15px;font-size:12px;transform:scaleX(0.9550);">1</span>
<div class="dc" style="left:42px;top:104px;width:45px;height:21px;background:#ffffff;"></div>
<div class="dc" style="left:87px;top:104px;width:56px;height:21px;background:#ffffff;"></div>
<div class="dc" style="left:143px;top:104px;width:46px;height:21px;background:#f0f0f0;"></div>
<div class="dc" style="left:189px;top:104px;width:65px;height:21px;background:#f0f0f0;"></div>
<div class="dc" style="left:254px;top:104px;width:54px;height:21px;background:#ffffff;"></div>
<div class="dc" style="left:308px;top:104px;width:36px;height:21px;background:#f0f0f0;"></div>
<div class="dc" style="left:344px;top:104px;width:48px;height:21px;background:#ffffff;"></div>
<div class="dc" style="left:392px;top:104px;width:46px;height:21px;background:#ffffff;"></div>
<div class="dc" style="left:438px;top:104px;width:44px;height:21px;background:#ffffff;"></div>
<div class="dc" style="left:482px;top:104px;width:43px;height:21px;background:#f0f0f0;"></div>
<div class="dc" style="left:525px;top:104px;width:44px;height:21px;background:#ffffff;"></div>
<div class="dc" style="left:569px;top:104px;width:64px;height:21px;background:#ffffff;"></div>
<div class="dc" style="left:633px;top:104px;width:35px;height:21px;background:#f0f0f0;"></div>
<div class="chk" style="left:54px;top:104px;width:19px;height:19px;"><svg width="19" height="19" viewBox="0 0 19 19" style="position:absolute;left:0;top:0"><polygon points="2.9,5.9 6.5,9.4 12.1,3.9 12.1,7.6 6.5,13.1 2.9,9.7" fill="#000"/></svg></div>
<span class="t" style="left:90.60px;top:105.04px;line-height:15px;font-size:12px;transform:scaleX(0.9585);">Circle</span>
<div class="clip" style="left:143.6px;top:104px;width:40.4px;height:20px">
<span class="t" style="left:3.00px;top:1.04px;line-height:15px;font-size:12px;transform:scaleX(0.9993);color:#b6b6b6;">optional</span>
</div>
<span class="t" style="left:192.60px;top:105.04px;line-height:15px;font-size:12px;transform:scaleX(0.9978);">Active</span>
<span class="t" style="left:257.40px;top:105.04px;line-height:15px;font-size:12px;transform:scaleX(1.0090);">Height</span>
<div class="clip" style="left:308.8px;top:104px;width:30.2px;height:20px">
<span class="t" style="left:3.00px;top:1.04px;line-height:15px;font-size:12px;transform:scaleX(0.9993);color:#b6b6b6;">optional</span>
</div>
<span class="t" style="left:347.40px;top:105.04px;line-height:15px;font-size:12px;transform:scaleX(0.9550);">1.2</span>
<div class="clip" style="left:392.8px;top:104px;width:40.2px;height:20px">
<span class="t" style="left:3.00px;top:1.04px;line-height:15px;font-size:12px;transform:scaleX(0.9993);color:#b6b6b6;">optional</span>
</div>
<div class="clip" style="left:438.8px;top:104px;width:38.2px;height:20px">
<span class="t" style="left:3.00px;top:1.04px;line-height:15px;font-size:12px;transform:scaleX(0.9993);color:#b6b6b6;">optional</span>
</div>
<span class="t" style="left:528.60px;top:105.04px;line-height:15px;font-size:12px;transform:scaleX(0.8386);">POST</span>
<span class="t" style="left:572.60px;top:105.04px;line-height:15px;font-size:12px;transform:scaleX(1.0230);color:#b6b6b6;">optional</span>
<div class="rn" style="left:24px;top:125px;width:18px;height:21px;"></div>
<span class="t" style="left:30.66px;top:128.14px;line-height:15px;font-size:12px;transform:scaleX(0.9550);">2</span>
<div class="dc" style="left:42px;top:125px;width:45px;height:21px;background:#ffffff;"></div>
<div class="dc" style="left:87px;top:125px;width:56px;height:21px;background:#ffffff;"></div>
<div class="dc" style="left:143px;top:125px;width:46px;height:21px;background:#f0f0f0;"></div>
<div class="dc" style="left:189px;top:125px;width:65px;height:21px;background:#f0f0f0;"></div>
<div class="dc" style="left:254px;top:125px;width:54px;height:21px;background:#ffffff;"></div>
<div class="dc" style="left:308px;top:125px;width:36px;height:21px;background:#f0f0f0;"></div>
<div class="dc" style="left:344px;top:125px;width:48px;height:21px;background:#ffffff;"></div>
<div class="dc" style="left:392px;top:125px;width:46px;height:21px;background:#ffffff;"></div>
<div class="dc" style="left:438px;top:125px;width:44px;height:21px;background:#ffffff;"></div>
<div class="dc" style="left:482px;top:125px;width:43px;height:21px;background:#f0f0f0;"></div>
<div class="dc" style="left:525px;top:125px;width:44px;height:21px;background:#ffffff;"></div>
<div class="dc" style="left:569px;top:125px;width:64px;height:21px;background:#ffffff;"></div>
<div class="dc" style="left:633px;top:125px;width:35px;height:21px;background:#f0f0f0;"></div>
<div class="chk" style="left:54px;top:125px;width:19px;height:19px;"><svg width="19" height="19" viewBox="0 0 19 19" style="position:absolute;left:0;top:0"><polygon points="2.9,5.9 6.5,9.4 12.1,3.9 12.1,7.6 6.5,13.1 2.9,9.7" fill="#000"/></svg></div>
<span class="t" style="left:90.60px;top:126.04px;line-height:15px;font-size:12px;transform:scaleX(0.9147);">Sphere</span>
<div class="clip" style="left:143.6px;top:125px;width:40.4px;height:20px">
<span class="t" style="left:3.00px;top:1.04px;line-height:15px;font-size:12px;transform:scaleX(0.9993);color:#b6b6b6;">optional</span>
</div>
<span class="t" style="left:192.60px;top:126.04px;line-height:15px;font-size:12px;transform:scaleX(0.9978);">Active</span>
<span class="t" style="left:257.40px;top:126.04px;line-height:15px;font-size:12px;transform:scaleX(1.0090);">Height</span>
<div class="clip" style="left:308.8px;top:125px;width:30.2px;height:20px">
<span class="t" style="left:3.00px;top:1.04px;line-height:15px;font-size:12px;transform:scaleX(0.9993);color:#b6b6b6;">optional</span>
</div>
<span class="t" style="left:347.40px;top:126.04px;line-height:15px;font-size:12px;transform:scaleX(0.9550);">0</span>
<div class="clip" style="left:392.8px;top:125px;width:40.2px;height:20px">
<span class="t" style="left:3.00px;top:1.04px;line-height:15px;font-size:12px;transform:scaleX(0.9993);color:#b6b6b6;">optional</span>
</div>
<span class="t" style="left:441.60px;top:126.04px;line-height:15px;font-size:12px;transform:scaleX(0.9550);">1.2</span>
<span class="t" style="left:528.60px;top:126.04px;line-height:15px;font-size:12px;transform:scaleX(0.8685);">BALL</span>
<span class="t" style="left:572.60px;top:126.04px;line-height:15px;font-size:12px;transform:scaleX(1.0230);color:#b6b6b6;">optional</span>
<div class="rn" style="left:24px;top:146px;width:18px;height:21px;"></div>
<div class="dc" style="left:42px;top:146px;width:45px;height:21px;background:#ffffff;"></div>
<div class="dc" style="left:87px;top:146px;width:56px;height:21px;background:#ffffff;"></div>
<div class="dc" style="left:143px;top:146px;width:46px;height:21px;background:#f0f0f0;"></div>
<div class="dc" style="left:189px;top:146px;width:65px;height:21px;background:#f0f0f0;"></div>
<div class="dc" style="left:254px;top:146px;width:54px;height:21px;background:#ffffff;"></div>
<div class="dc" style="left:308px;top:146px;width:36px;height:21px;background:#f0f0f0;"></div>
<div class="dc" style="left:344px;top:146px;width:48px;height:21px;background:#ffffff;"></div>
<div class="dc" style="left:392px;top:146px;width:46px;height:21px;background:#ffffff;"></div>
<div class="dc" style="left:438px;top:146px;width:44px;height:21px;background:#ffffff;"></div>
<div class="dc" style="left:482px;top:146px;width:43px;height:21px;background:#f0f0f0;"></div>
<div class="dc" style="left:525px;top:146px;width:44px;height:21px;background:#ffffff;"></div>
<div class="dc" style="left:569px;top:146px;width:64px;height:21px;background:#ffffff;"></div>
<div class="dc" style="left:633px;top:146px;width:35px;height:21px;background:#f0f0f0;"></div>
<div class="chk" style="left:54px;top:146px;width:19px;height:19px;"></div>
<div class="clip" style="left:143.6px;top:146px;width:40.4px;height:20px">
<span class="t" style="left:3.00px;top:1.04px;line-height:15px;font-size:12px;transform:scaleX(0.9993);color:#b6b6b6;">optional</span>
</div>
<div class="clip" style="left:308.8px;top:146px;width:30.2px;height:20px">
<span class="t" style="left:3.00px;top:1.04px;line-height:15px;font-size:12px;transform:scaleX(0.9993);color:#b6b6b6;">optional</span>
</div>
<div class="clip" style="left:392.8px;top:146px;width:40.2px;height:20px">
<span class="t" style="left:3.00px;top:1.04px;line-height:15px;font-size:12px;transform:scaleX(0.9993);color:#b6b6b6;">optional</span>
</div>
<div class="clip" style="left:438.8px;top:146px;width:38.2px;height:20px">
<span class="t" style="left:3.00px;top:1.04px;line-height:15px;font-size:12px;transform:scaleX(0.9993);color:#b6b6b6;">optional</span>
</div>
<span class="t" style="left:572.60px;top:147.04px;line-height:15px;font-size:12px;transform:scaleX(1.0230);color:#b6b6b6;">optional</span>
<div class="btn" style="left:673px;top:80px;width:24px;height:22px;"></div>
<svg class="ic" style="left:678px;top:84px" width="14" height="14" viewBox="0 0 14 14"><rect width="14" height="14" fill="#ece9d8"/><defs><linearGradient id="au" x1="0" y1="0" x2="1" y2="0"><stop offset="0" stop-color="#2f6fe6"/><stop offset="0.3" stop-color="#6fa2f6"/><stop offset="0.55" stop-color="#b6d2fd"/><stop offset="0.8" stop-color="#6c9ff4"/><stop offset="1" stop-color="#2f6fe6"/></linearGradient></defs><path d="M6.5,1.7 L13,8.5 L9,8.5 L9,10.7 L4.2,10.7 L4.2,8.5 L0,8.5 Z" fill="url(#au)" stroke="#1f56d6" stroke-width="1"/><path d="M0.6,7.9 L6.5,1.7 L12.4,7.9" fill="none" stroke="#0c1226" stroke-width="1.0"/><path d="M0.2,7.0 L5.8,1.2" fill="none" stroke="#ffffff" stroke-opacity="0.7" stroke-width="0.7"/></svg>
<div class="btn" style="left:673px;top:104px;width:24px;height:22px;"></div>
<svg class="ic" style="left:678px;top:108px" width="14" height="14" viewBox="0 0 14 14"><rect width="14" height="14" fill="#ece9d8"/><defs><linearGradient id="ad" x1="0" y1="0" x2="1" y2="0"><stop offset="0" stop-color="#2f6fe6"/><stop offset="0.3" stop-color="#6fa2f6"/><stop offset="0.55" stop-color="#b6d2fd"/><stop offset="0.8" stop-color="#6c9ff4"/><stop offset="1" stop-color="#2f6fe6"/></linearGradient></defs><path d="M6.5,12.3 L13,5.5 L9,5.5 L9,3.3 L4.2,3.3 L4.2,5.5 L0,5.5 Z" fill="url(#ad)" stroke="#1f56d6" stroke-width="1"/><path d="M0.6,6.1 L6.5,12.3 L12.4,6.1" fill="none" stroke="#0c1226" stroke-width="1.0"/></svg>
<div class="btn" style="left:673px;top:128px;width:24px;height:22px;"></div>
<svg class="ic" style="left:677px;top:132px" width="16" height="16" viewBox="0 0 16 16"><rect width="16" height="15.6" fill="#ece9d8"/><path d="M1.6,1.6 L15.2,14.8 M13.6,3.6 Q6,8.5 2.2,14.4" stroke="#c4ccee" stroke-width="3.2" fill="none" stroke-linecap="round"/><path d="M2,2.2 L15,15 " stroke="#3a3a50" stroke-opacity="0.55" stroke-width="1.6" fill="none" stroke-linecap="round"/><path d="M1.2,1.2 L14.4,14.2 M13,3 Q6,7.6 1.7,13.7" stroke="#e4103c" stroke-width="2.2" fill="none" stroke-linecap="round"/></svg>
</div>
<div class="lbl" style="left:40px;top:373px;width:97px;height:31px"></div>
<span class="t" style="left:45.00px;top:378.46px;line-height:20px;font-size:16px;transform:scaleX(0.9839);-webkit-text-stroke:0;">Vertex parts</span>
<div class="lbl" style="left:456px;top:228px;width:115px;height:31px"></div>
<span class="t" style="left:461.50px;top:233.06px;line-height:20px;font-size:16px;transform:scaleX(0.9754);-webkit-text-stroke:0;">Segment parts</span>
</body></html>
